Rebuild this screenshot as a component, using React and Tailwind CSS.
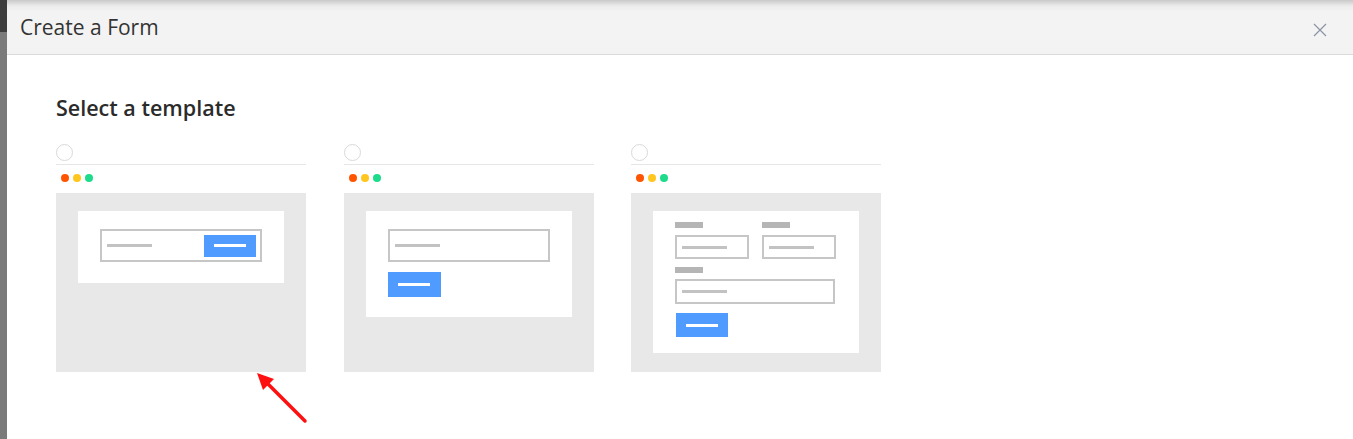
import React from "react";

const font = { fontFamily: '"Open Sans", "Noto Sans", sans-serif' };

function Dots() {
  return (
    <div className="flex items-start gap-[4px] h-[28px] pt-[9px] pl-[5px]">
      <span className="w-[8px] h-[8px] rounded-full bg-[#ff5500]" />
      <span className="w-[8px] h-[8px] rounded-full bg-[#ffc61f]" />
      <span className="w-[8px] h-[8px] rounded-full bg-[#1ddb8b]" />
    </div>
  );
}

function Input({ className = "" }) {
  return (
    <div className={"border-2 border-[#c6c6c6] flex items-center pl-[5px] " + className}>
      <span className="block w-[45px] h-[3px] bg-[#c2c2c2]" />
    </div>
  );
}

function Btn({ className = "" }) {
  return (
    <div className={"bg-[#4f9bff] flex items-center justify-center " + className}>
      <span className="block w-[32px] h-[3px] bg-white" />
    </div>
  );
}

function Card({ children }) {
  return (
    <div className="w-[250px] flex flex-col">
      <div className="h-[20px] flex items-start">
        <span className="w-[17px] h-[17px] rounded-full border border-[#d9d9de] bg-white" />
      </div>
      <div className="h-[1px] bg-[#e6e6e6]" />
      <Dots />
      <div className="h-[179px] bg-[#e8e8e8] pt-[18px] flex justify-center">
        {children}
      </div>
    </div>
  );
}

export default function App() {
  return (
    <div className="relative w-[1353px] h-[439px] flex bg-white overflow-hidden" style={font}>
      <div className="w-[7px] flex flex-col">
        <div className="h-[32px] bg-[#3d3d3d]" />
        <div className="flex-1 bg-[#7a7a7a]" />
      </div>
      <div className="flex-1 flex flex-col bg-white">
        <div className="h-[55px] bg-[linear-gradient(to_bottom,#c9c9c9_0px,#ececec_6px,#f3f3f3_12px)] border-b border-[#dadada] flex items-center justify-between pl-[13px] pr-[26px]">
          <span className="text-[21px] text-[#333] pt-[1px]">Create a Form</span>
          <svg width="14" height="14" viewBox="0 0 14 14" className="mt-[6px]">
            <path d="M1 1L13 13M13 1L1 13" stroke="#8a94a3" strokeWidth="1.2" />
          </svg>
        </div>
        <div className="pl-[49px] pt-[39px]">
          <div className="text-[21.5px] font-semibold text-[#2b2b2b] leading-[28px] h-[50px]">Select a template</div>
          <div className="flex gap-[37.5px]">
            <Card>
              <div className="w-[206px] h-[72px] bg-white pt-[18px] flex justify-center">
                <div className="w-[162px] h-[33px] border-2 border-[#c6c6c6] flex items-center justify-between pl-[5px] pr-[4px]">
                  <span className="block w-[45px] h-[3px] bg-[#c2c2c2]" />
                  <Btn className="w-[52px] h-[22px]" />
                </div>
              </div>
            </Card>
            <Card>
              <div className="w-[206px] h-[106px] bg-white pt-[18px] pl-[22px] flex flex-col gap-[10px]">
                <Input className="w-[162px] h-[33px]" />
                <Btn className="w-[53px] h-[25px]" />
              </div>
            </Card>
            <Card>
              <div className="w-[206px] h-[142px] bg-white pt-[11px] pl-[22px] flex flex-col">
                <div className="flex gap-[13px]">
                  <div className="flex flex-col gap-[7px]">
                    <span className="block w-[28px] h-[6px] bg-[#b5b5b5]" />
                    <Input className="w-[74px] h-[24px]" />
                  </div>
                  <div className="flex flex-col gap-[7px]">
                    <span className="block w-[28px] h-[6px] bg-[#b5b5b5]" />
                    <Input className="w-[74px] h-[24px]" />
                  </div>
                </div>
                <span className="block w-[28px] h-[6px] bg-[#b5b5b5] mt-[8px]" />
                <Input className="w-[160px] h-[25px] mt-[6px]" />
                <Btn className="w-[52px] h-[24px] mt-[9px] ml-[1px]" />
              </div>
            </Card>
          </div>
        </div>
      </div>
      <svg className="absolute left-[250px] top-[366px]" width="70" height="70" viewBox="0 0 70 70">
        <path d="M55 55L14 14" stroke="#ff1010" strokeWidth="3.5" strokeLinecap="round" />
        <path d="M7 7L24 13L13 24Z" fill="#ff1010" />
      </svg>
    </div>
  );
}
